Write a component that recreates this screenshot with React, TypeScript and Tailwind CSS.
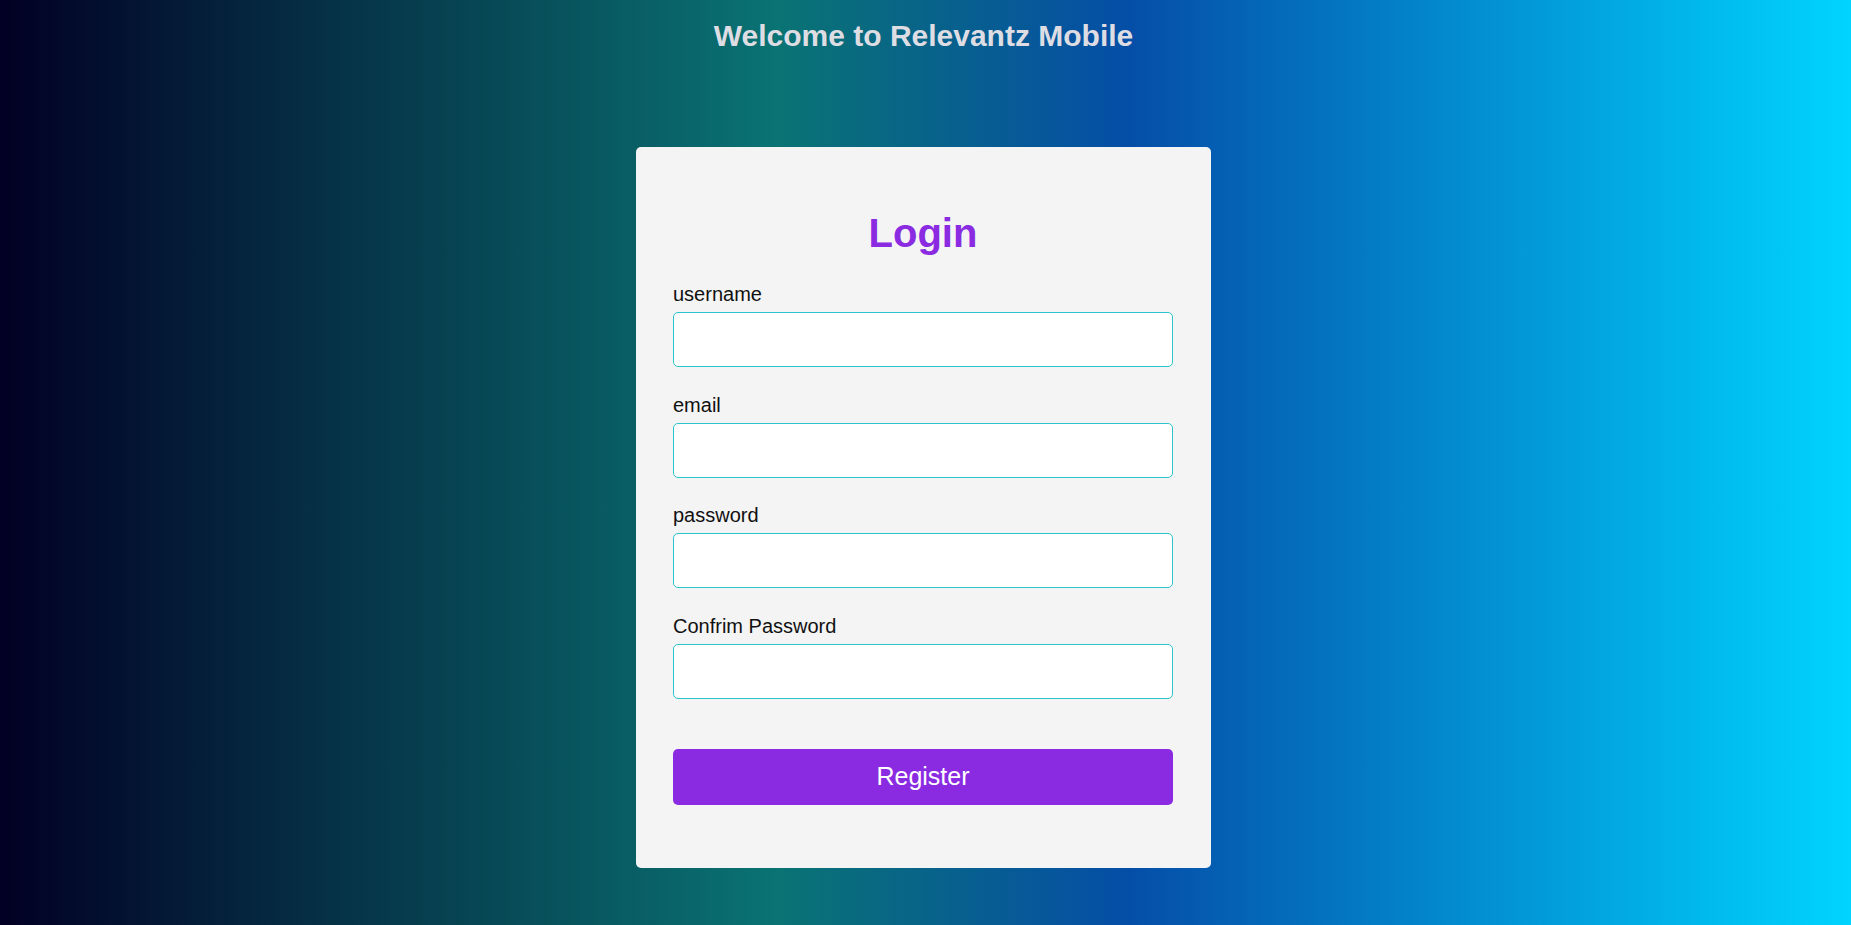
import React from "react";

const fields = ["username", "email", "password", "Confrim Password"];

export default function App() {
  return (
    <div
      className="min-h-screen w-full bg-[linear-gradient(90deg,#020024_0%,#0a7373_42%,#054ea7_61%,#00d4ff_100%)] pr-[4px] text-black"
      style={{ fontFamily: '"Liberation Sans", Arial, sans-serif' }}
    >
      <h1 className="m-0 pt-[19px] text-center text-[30px] font-bold leading-[34px] text-[#dedde3]">
        Welcome to Relevantz Mobile
      </h1>
      <div className="flex justify-center pt-[94px] pb-[58px]">
        <div className="w-[575px] rounded-[5px] bg-[#f4f4f4] pl-[37px] pr-[38px] pt-[63px] pb-[63px]">
          <h2 className="m-0 text-center text-[40px] font-bold leading-[46px] text-[#8a2be2]">
            Login
          </h2>
          <div className="mt-[27px] flex flex-col">
            {fields.map((f, i) => (
              <div key={f} className={i === 0 ? "" : "mt-[26.5px]"}>
                <label className="block text-[20px] leading-[23px] text-[#111]">{f}</label>
                <input
                  type={f.toLowerCase().includes("password") ? "password" : "text"}
                  className="mt-[6px] block h-[55px] w-full rounded-[5px] border border-[#2ec4cc] bg-white px-3 outline-none"
                />
              </div>
            ))}
          </div>
          <button className="mt-[50px] block h-[56px] w-full rounded-[5px] bg-[#8a2be2] text-[25px] text-white">
            Register
          </button>
        </div>
      </div>
    </div>
  );
}
